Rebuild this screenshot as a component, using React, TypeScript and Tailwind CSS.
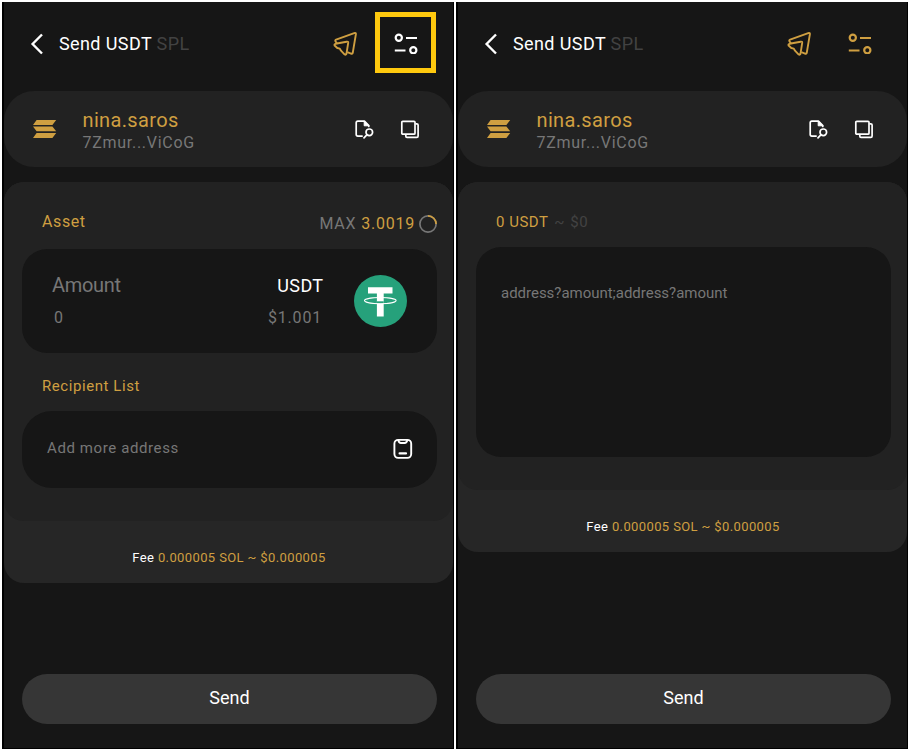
import type { ReactNode } from "react";

const GOLD = "#cf9f41";

function BackIcon() {
  return (
    <svg width="14" height="22" viewBox="0 0 14 22" fill="none" stroke="#fff" strokeWidth="2.4">
      <path d="M12 1.5 2.6 11l9.4 9.5" />
    </svg>
  );
}

function PlaneIcon() {
  return (
    <svg width="26" height="26" viewBox="0 0 26 26" fill="none" stroke={GOLD} strokeWidth="1.9" strokeLinejoin="round" strokeLinecap="round">
      <path d="M3.9 12.2 2.4 10.2Q1.9 9.2 3.1 8.7L21.2 2.1Q23.1 1.6 22.9 3.2L19.8 21.6Q19.3 23.2 18 22.6L15 21.4" />
      <path d="M1.6 14.5Q1 13.4 2.5 12.8L13.6 10.7Q15.4 10.4 15.2 11.9L13.5 22.6Q12.9 24.4 11.5 23.3L8 19.7 6.8 17.6 4.3 17Z" />
    </svg>
  );
}

function OptionsIcon({ color }: { color: string }) {
  return (
    <svg width="25" height="23" viewBox="0 0 25 23" fill="none" stroke={color} strokeWidth="2.2">
      <circle cx="5.8" cy="6.8" r="3.1" />
      <path d="M13 7H24M1.8 19.5h10.7" />
      <circle cx="20.3" cy="19.2" r="3.1" />
    </svg>
  );
}

function SolanaIcon() {
  return (
    <svg width="24" height="18" viewBox="0 0 24 18" fill={GOLD}>
      <path d="M3.6 0H23.2L19.4 5H0ZM0 6.6H19.4L23.2 11.2H3.6ZM3.6 13H23.2L19.4 18H0Z" />
    </svg>
  );
}

function FileSearchIcon() {
  return (
    <svg width="20" height="20" viewBox="0 0 20 20" fill="none" stroke="#fff" strokeWidth="1.7" strokeLinecap="round" strokeLinejoin="round">
      <path d="M7.1 17.1H2.8Q1.2 17.1 1.2 15.5V3.7Q1.2 2.1 2.8 2.1H9.4L13.8 6.7V7.5" />
      <path d="M9.2 2.3V6.8H13.6Z" fill="#fff" strokeWidth="1" />
      <circle cx="14.3" cy="13.3" r="3.3" />
      <path d="M11.8 15.9 9 18.8" />
    </svg>
  );
}

function CopyIcon() {
  return (
    <svg width="20" height="20" viewBox="0 0 20 20" fill="none" stroke="#fff" strokeWidth="1.7" strokeLinejoin="round">
      <rect x="1.8" y="2.3" width="13.2" height="12.9" rx="1" />
      <path d="M15.4 4.9H16.8Q18.1 4.9 18.1 6.1V16.9Q18.1 18.3 16.8 18.3H7Q5.8 18.3 5.8 16.9V15.7" />
    </svg>
  );
}

function ClipboardIcon() {
  return (
    <svg width="20" height="22" viewBox="0 0 20 22" fill="none" stroke="#fff" strokeWidth="1.9" strokeLinecap="round" strokeLinejoin="round">
      <rect x="1.4" y="1.9" width="16.8" height="18" rx="3.8" />
      <path d="M5.4 2.4Q5.8 5 8 5H11.6Q13.8 5 14.2 2.4" />
      <path d="M6.6 15.4H13" strokeWidth="2.2" />
    </svg>
  );
}

function TetherIcon() {
  return (
    <svg width="54" height="52" viewBox="0 0 54 52">
      <ellipse cx="27.5" cy="26" rx="26.5" ry="26" fill="#26a17b" />
      <path d="M15 12.2H39.5V18.5H30.7V41.6H23.9V18.5H15Z" fill="#fff" />
      <path d="M23.9 26.3H30.7V28.6H23.9Z" fill="#26a17b" />
      <ellipse cx="27.3" cy="25.6" rx="15.8" ry="3.1" fill="none" stroke="#fff" strokeWidth="1.1" />
    </svg>
  );
}

function Spinner() {
  return (
    <svg width="18" height="18" viewBox="0 0 18 18" fill="none" strokeWidth="1.7">
      <circle cx="9" cy="9" r="8.1" stroke="#777" />
      <path d="M9 .9A8.1 8.1 0 0 1 17.1 9" stroke={GOLD} />
    </svg>
  );
}

function Header({ active }: { active?: boolean }) {
  return (
    <header className="flex h-[89px] shrink-0 items-start pl-[26px]">
      <div className="mt-[31px]"><BackIcon /></div>
      <h1 className="ml-[15px] mt-[30px] grow whitespace-nowrap text-[18px] leading-6 tracking-[0.4px] text-white">
        Send USDT <span className="text-[#424242]">SPL</span>
      </h1>
      <div className="mt-[29px] mr-[16px]"><PlaneIcon /></div>
      <div
        className={
          active
            ? "mt-[10px] mr-[17px] flex h-[61px] w-[61px] items-center justify-center border-[5px] border-[#ffc90e]"
            : "mt-[10px] mr-[17px] flex h-[61px] w-[61px] items-center justify-center"
        }
      >
        <OptionsIcon color={active ? "#fff" : GOLD} />
      </div>
    </header>
  );
}

function AccountCard() {
  return (
    <section className="flex h-[76px] shrink-0 items-start rounded-[30px] bg-[#222]">
      <div className="mt-[29px] ml-[29px]"><SolanaIcon /></div>
      <div className="ml-[25.5px] mt-[17px] grow">
        <div className="text-[20px] leading-6 tracking-[0.35px] text-[#cf9f41]">nina.saros</div>
        <div className="mt-px text-[16px] leading-5 tracking-[0.72px] text-[#777]">7Zmur...ViCoG</div>
      </div>
      <div className="mt-[28px]"><FileSearchIcon /></div>
      <div className="mt-[28px] mr-[33px] ml-[25px]"><CopyIcon /></div>
    </section>
  );
}

function Screen({ active, children }: { active?: boolean; children: ReactNode }) {
  return (
    <div className="flex h-[747px] w-[452px] flex-col border-r border-b border-l-2 border-black bg-[#161616]">
      <Header active={active} />
      <AccountCard />
      <div className="mt-[15px] rounded-[20px] bg-[#262626]">
        {children}
        <div className="h-[62px] pt-[27px] pl-px text-center text-[13px] leading-5 tracking-[0.38px] text-[#cf9f41]">
          <span className="text-white">Fee</span> 0.000005 SOL ~ $0.000005
        </div>
      </div>
      <button className="mt-auto mr-[16px] mb-[24px] ml-[18px] h-[50px] shrink-0 rounded-[25px] bg-[#363636] pb-[4px] text-[18px] text-white">
        Send
      </button>
    </div>
  );
}

export default function App() {
  return (
    <main className="flex h-[751px] w-[910px] gap-[2px] bg-white pt-[2px] pl-[2px] font-['Roboto',sans-serif]">
      <Screen active>
        <div className="h-[339px] rounded-[20px] bg-[#222] pr-[16px] pl-[18px]">
          <div className="flex h-[67px] items-start pl-5">
            <div className="mt-[28px] grow text-[16px] leading-6 tracking-[0.6px] text-[#cf9f41]">Asset</div>
            <div className="mt-[30px] mr-[4px] text-[16px] leading-6 tracking-[0.78px] text-[#cf9f41]">
              <span className="text-[#777]">MAX</span> 3.0019
            </div>
            <div className="mt-[33px]"><Spinner /></div>
          </div>
          <div className="flex h-[104px] items-start rounded-[25px] bg-[#161616] pl-[30px]">
            <div className="mt-[24px] grow text-[#777]">
              <div className="text-[20px] leading-6 tracking-[-0.3px]">Amount</div>
              <div className="mt-[9px] ml-[2px] text-[16px] leading-6">0</div>
            </div>
            <div className="mt-[25px] mr-[30px] text-right">
              <div className="-mr-[0.5px] text-[18px] leading-6 tracking-[0.4px] text-white">USDT</div>
              <div className="mt-[8px] mr-px text-[16px] leading-6 tracking-[0.8px] text-[#777]">$1.001</div>
            </div>
            <div className="mt-[26px] mr-[30px]"><TetherIcon /></div>
          </div>
          <div className="h-[58px] pt-[21px] pl-5 text-[15px] leading-6 tracking-[0.57px] text-[#cf9f41]">Recipient List</div>
          <div className="flex h-[77px] items-start rounded-[30px] bg-[#161616] pl-[25px]">
            <div className="mt-[25px] grow text-[15px] leading-6 tracking-[0.6px] text-[#777]">Add more address</div>
            <div className="mt-[27px] mr-[24px]"><ClipboardIcon /></div>
          </div>
        </div>
      </Screen>
      <Screen>
        <div className="h-[308px] rounded-[20px] bg-[#222] pr-[16px] pl-[18px]">
          <div className="h-[65px] pt-[28px] pl-5 text-[15px] leading-6 tracking-[0.5px] text-[#cf9f41]">
            0 USDT <span className="ml-[2px] text-[#424242]">~ <span className="ml-px">$0</span></span>
          </div>
          <div className="h-[210px] rounded-[25px] bg-[#161616] pt-[34px] pl-[25px] text-[15px] leading-6 tracking-[-0.02px] text-[#777]">
            address?amount;address?amount
          </div>
        </div>
      </Screen>
    </main>
  );
}
